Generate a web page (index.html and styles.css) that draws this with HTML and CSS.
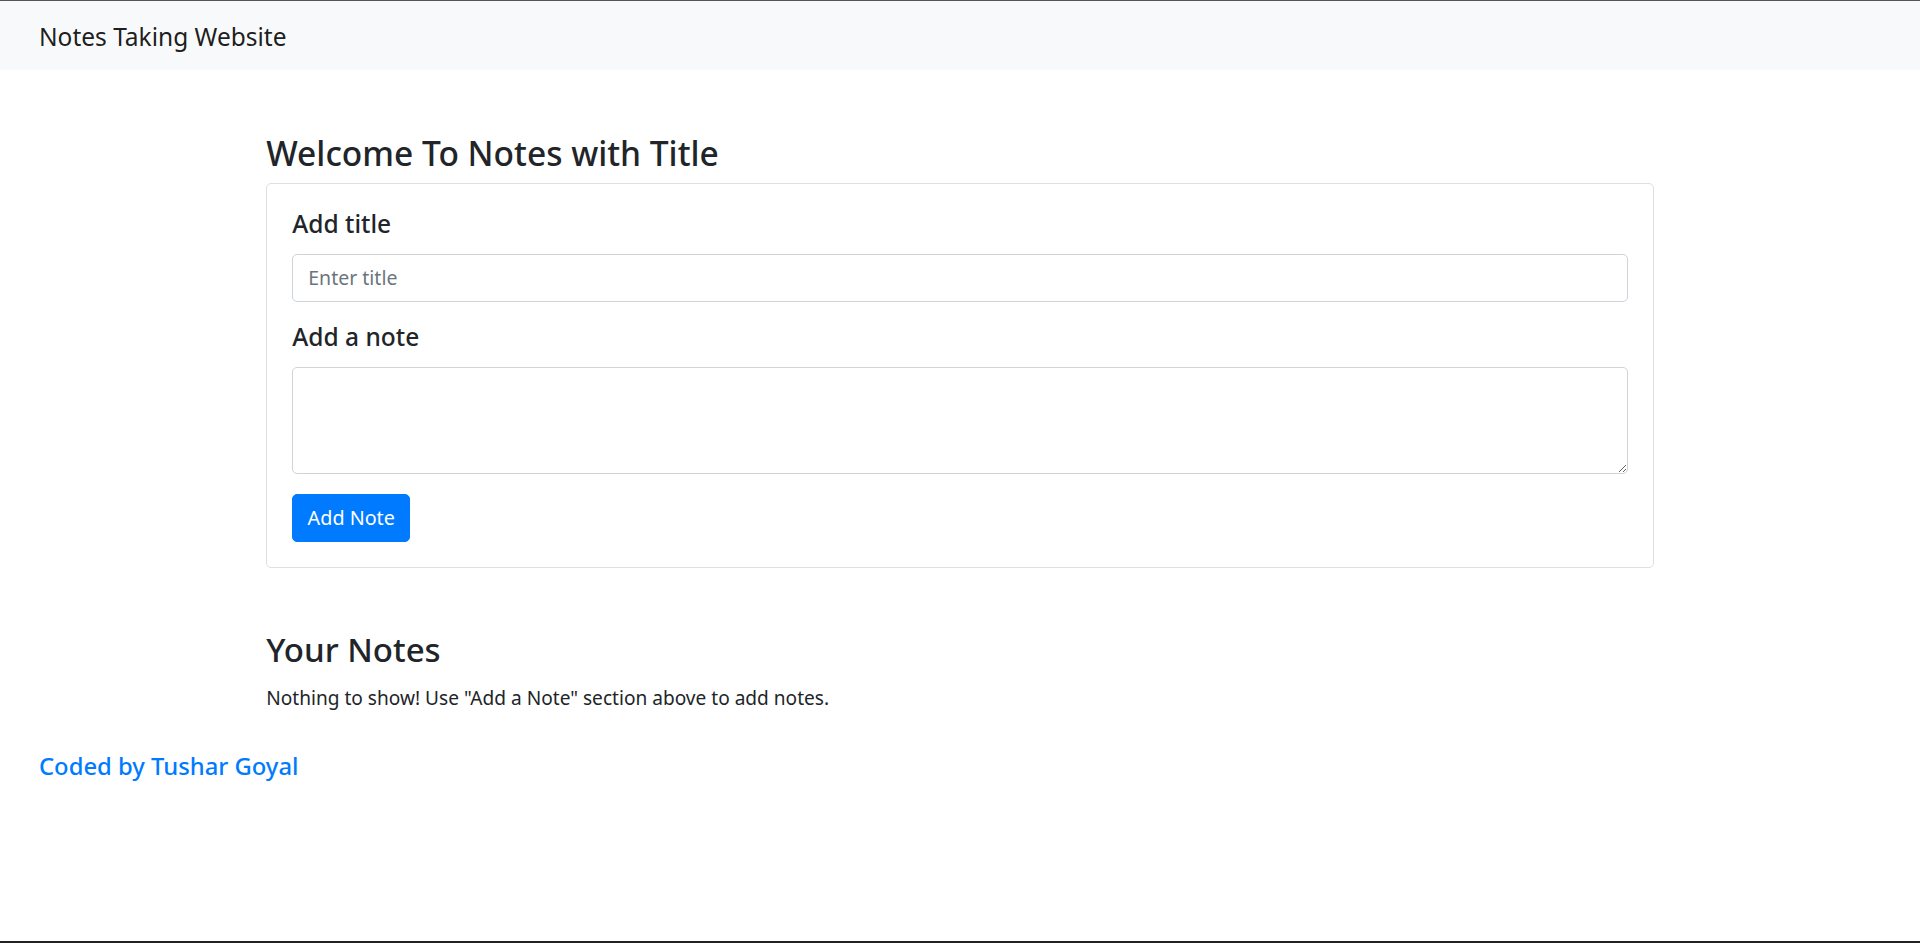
FILE: index.html
```html
<!DOCTYPE html>
<html lang="en">
<head>
<meta charset="utf-8">
<title>Notes Taking Website</title>
<link rel="stylesheet" href="styles.css">
</head>
<body>
<div class="frame">
  <nav class="navbar">
    <a class="brand" href="#">Notes Taking Website</a>
  </nav>
  <main class="container">
    <h2 class="page-title">Welcome To Notes with Title</h2>
    <div class="card">
      <div class="card-body">
        <h5 class="card-title">Add title</h5>
        <div class="form-group">
          <input class="form-control" type="text" placeholder="Enter title">
        </div>
        <h5 class="card-title">Add a note</h5>
        <div class="form-group">
          <textarea class="form-control textarea" rows="3"></textarea>
        </div>
        <button class="btn-primary" type="button">Add Note</button>
      </div>
    </div>
    <h3 class="notes-title">Your Notes</h3>
    <p class="empty">Nothing to show! Use "Add a Note" section above to add notes.</p>
  </main>
  <footer class="footer">
    <a class="credit" href="#">Coded by Tushar Goyal</a>
  </footer>
</div>
</body>
</html>
```
FILE: styles.css
```css
* { box-sizing: border-box; }
html, body { margin: 0; padding: 0; }
body {
  font-family: "Noto Sans", "Open Sans", sans-serif;
  color: #212529;
  background: #fff;
}
.frame {
  min-height: 100vh;
  display: flex;
  flex-direction: column;
  border-top: 1px solid #555;
  border-bottom: 2px solid #222;
}
.navbar {
  height: 69px;
  background: #f8f9fa;
  display: flex;
  align-items: center;
  padding: 2px 0 0 39px;
}
.brand {
  font-size: 24.5px;
  line-height: 30px;
  color: rgba(0,0,0,.9);
  text-decoration: none;
}
.container {
  width: 1425px;
  margin: 0 auto;
  padding: 0 18.75px;
}
.page-title {
  font-size: 33.5px;
  line-height: 1.2;
  font-weight: 500;
  margin: 63px 0 10px;
}
.card {
  border: 1px solid #dfdfdf;
  border-radius: 5px;
}
.card-body { padding: 25px; }
.card-title {
  font-size: 24.5px;
  line-height: 30px;
  font-weight: 500;
  margin: 0 0 15px;
}
.form-group { margin-bottom: 20px; }
.form-control {
  display: block;
  width: 100%;
  height: 47.5px;
  padding: 7.5px 15px;
  font-family: inherit;
  font-size: 19.5px;
  line-height: 30px;
  color: #495057;
  background: #fff;
  border: 1px solid #ced4da;
  border-radius: 5px;
  margin: 0;
}
.form-control::placeholder { color: #6c757d; }
.textarea { height: 107.5px; resize: vertical; }
.btn-primary {
  display: block;
  height: 47.5px;
  width: 118px;
  padding: 0;
  font-family: inherit;
  font-size: 19.75px;
  color: #fff;
  background: #007bff;
  border: 1px solid #007bff;
  border-radius: 5px;
}
.notes-title {
  font-size: 33px;
  line-height: 1.2;
  font-weight: 500;
  margin: 62px 0 15px;
}
.empty {
  font-size: 19.1px;
  line-height: 1.5;
  margin: 0;
}
.footer {
  padding: 38.7px 0 0 39px;
}
.credit {
  font-size: 23.8px;
  line-height: 1.2;
  font-weight: 500;
  color: #007bff;
  text-decoration: none;
}
```
